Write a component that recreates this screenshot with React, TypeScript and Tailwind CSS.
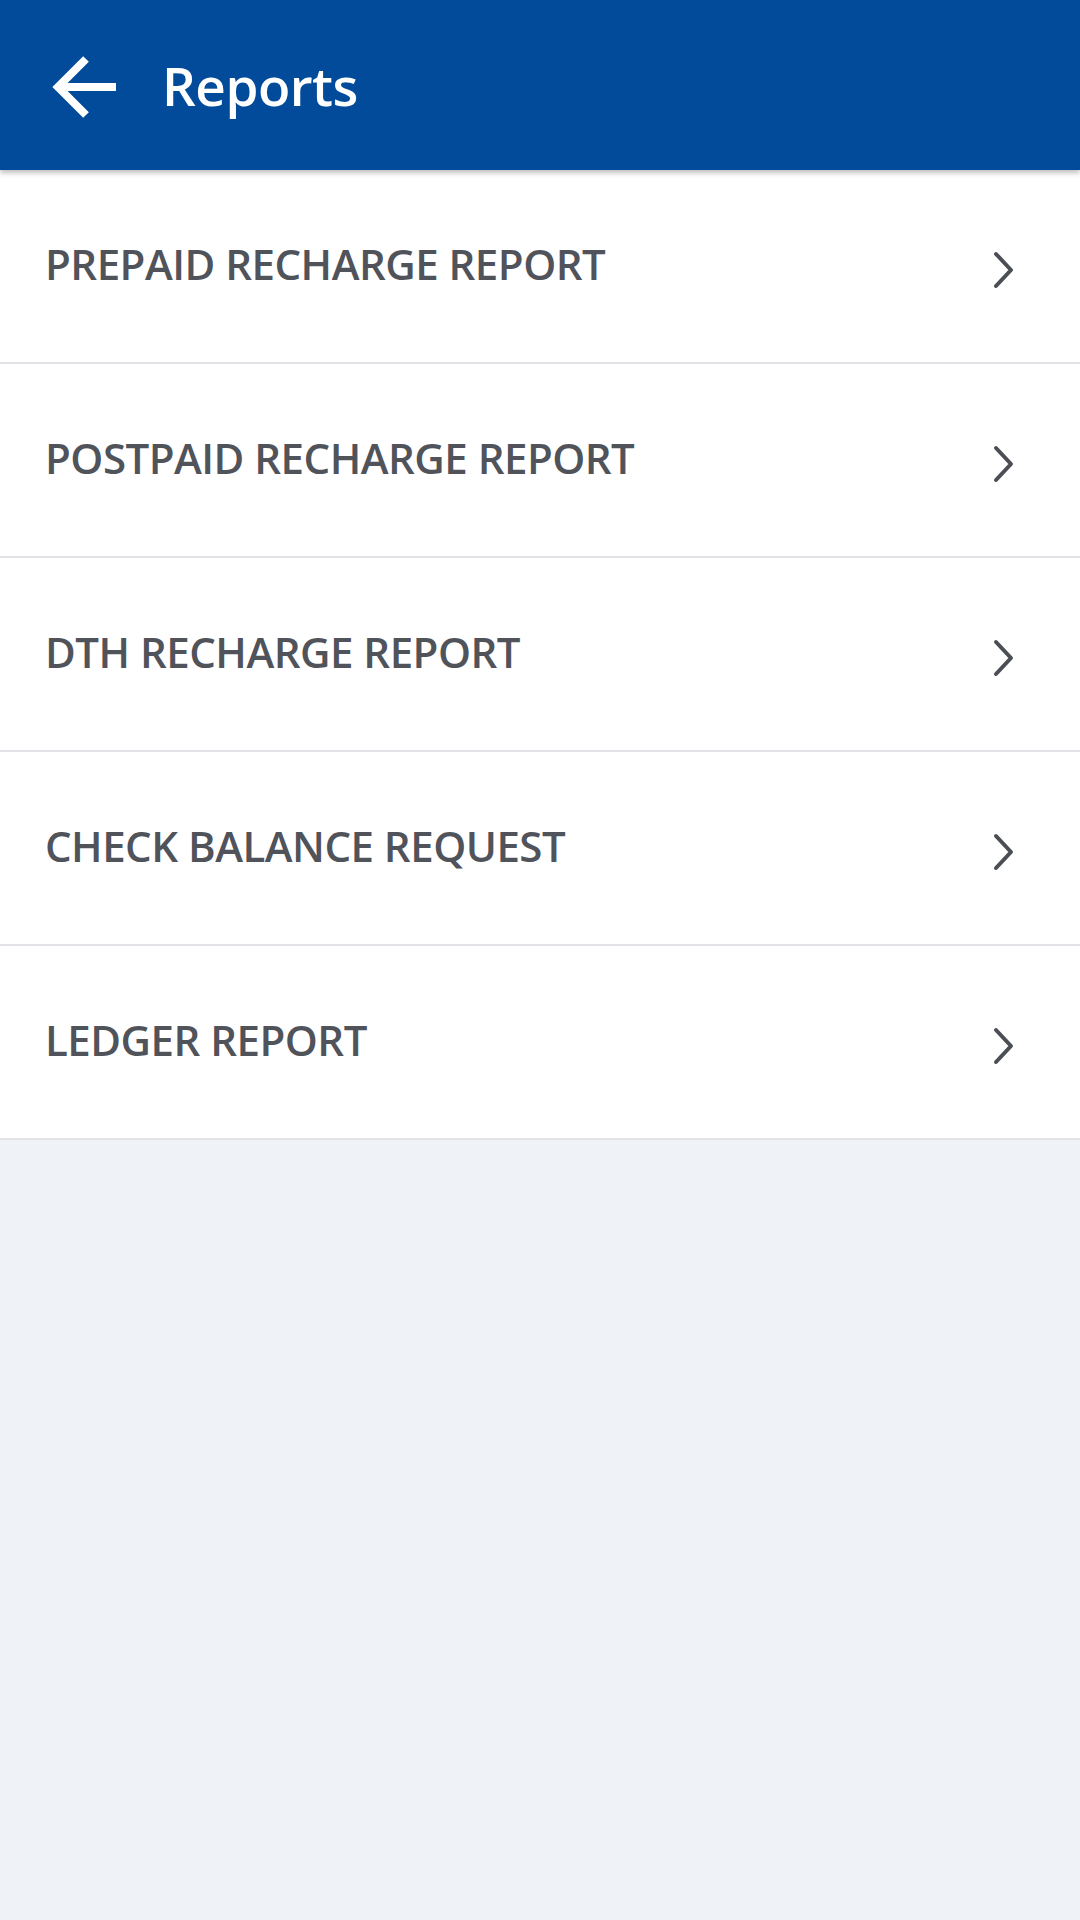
const items = [
  "PREPAID RECHARGE REPORT",
  "POSTPAID RECHARGE REPORT",
  "DTH RECHARGE REPORT",
  "CHECK BALANCE REQUEST",
  "LEDGER REPORT",
];

export default function App() {
  return (
    <main
      className="min-h-screen bg-[#eff3f8] flex flex-col"
      style={{ fontFamily: '"Open Sans", "Noto Sans", sans-serif' }}
    >
      {/* HEADER */}
      <header className="relative z-10 h-[170px] bg-[#024b9a] flex items-center shadow-[0_3px_5px_rgba(0,0,0,0.25)]">
        <div className="w-[162px] pl-[50px] flex items-center mt-[4px]">
          <svg width="66" height="64" viewBox="0 0 66 64" fill="none">
            <path
              d="M8 32 H66 M36 4 L8 32 L36 60"
              stroke="white"
              strokeWidth="8"
              strokeLinejoin="miter"
            />
          </svg>
        </div>
        <h1 className="text-white text-[53px] font-semibold tracking-[-0.5px] leading-none">
          Reports
        </h1>
      </header>

      {/* LIST */}
      <ul className="bg-white">
        {items.map((item) => (
          <li
            key={item}
            className="h-[194px] border-b-2 border-[#e1e3e6] flex items-center justify-between pl-[45px] pr-[64px]"
          >
            <span className="text-[42px] font-semibold text-[#50535a] tracking-[-0.5px] mb-[5px]">
              {item}
            </span>
            <svg
              width="24"
              height="38"
              viewBox="0 0 24 38"
              fill="none"
              className="mt-[8px]"
            >
              <path
                d="M4 3 L19 19 L4 35"
                stroke="#4b4e54"
                strokeWidth="4"
                strokeLinecap="round"
                strokeLinejoin="round"
              />
            </svg>
          </li>
        ))}
      </ul>
    </main>
  );
}
